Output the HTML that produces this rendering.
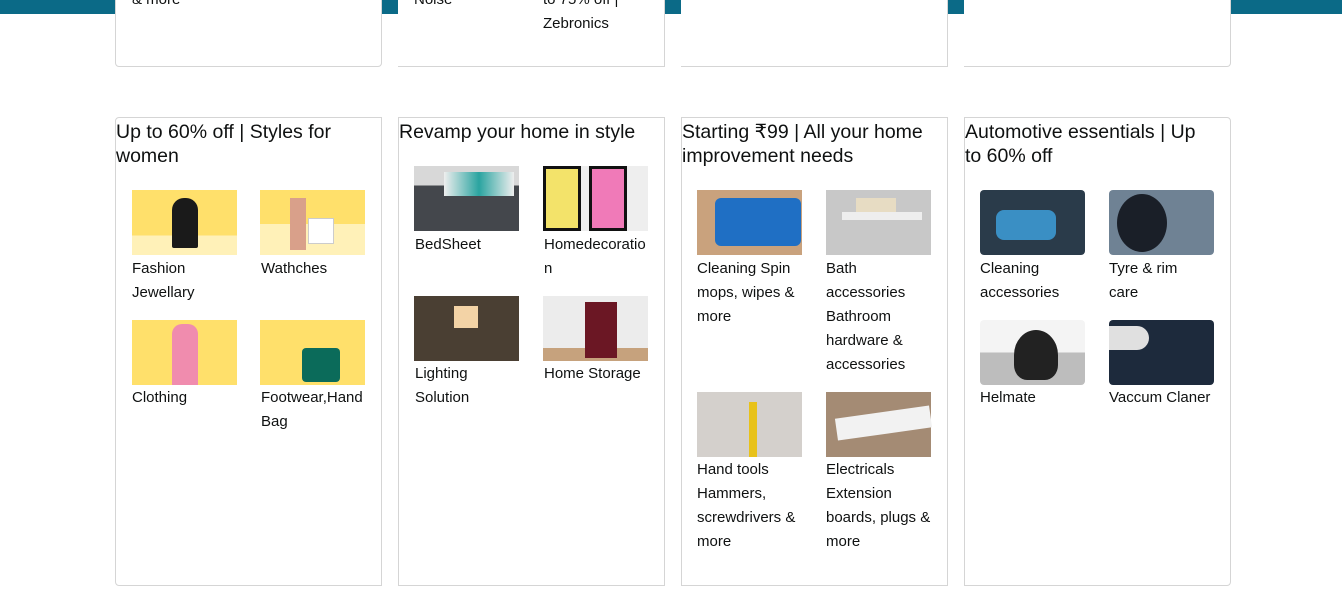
<!DOCTYPE html>
<html><head><meta charset="utf-8"><style>
*{margin:0;padding:0;box-sizing:border-box}
body{width:1342px;height:608px;background:#fff;position:relative;overflow:hidden;font-family:"Segoe UI","Liberation Sans","DejaVu Sans",sans-serif;color:#0f1111}
.bar{position:absolute;left:0;top:0;width:1342px;height:14px;background:#0b6a87}
.card{position:absolute;background:#fff;border:1px solid #d5d5d5}
.h{position:absolute;font-size:19.5px;line-height:24px;color:#0f1111;width:262px}
.img{position:absolute;width:105px;height:65px}
.t{position:absolute;font-size:15px;line-height:24px;width:106px;color:#0f1111;overflow-wrap:anywhere}
</style></head><body>
<div class="bar"></div>
<div class="card" style="left:115px;top:-10px;width:267px;height:77px;border-radius:0 0 4px 4px"></div>
<div class="card" style="left:398px;top:-10px;width:267px;height:77px;border-left:none"></div>
<div class="card" style="left:681px;top:-10px;width:267px;height:77px;border-left:none"></div>
<div class="card" style="left:964px;top:-10px;width:267px;height:77px;border-left:none;border-radius:0 0 4px 0"></div>
<div class="t" style="left:132px;top:-12px">&amp; more</div>
<div class="t" style="left:414px;top:-12px">Noise</div>
<div class="t" style="left:543px;top:-12px">to 75% off | Zebronics</div>

<div class="card" style="left:115px;top:117px;width:267px;height:469px;border-radius:4px 0 0 4px"></div>
<div class="card" style="left:398px;top:117px;width:267px;height:469px"></div>
<div class="card" style="left:681px;top:117px;width:267px;height:469px"></div>
<div class="card" style="left:964px;top:117px;width:267px;height:469px;border-radius:0 4px 4px 0"></div>

<div class="h" style="left:116px;top:120px">Up to 60% off | Styles for women</div>
<div class="h" style="left:399px;top:120px">Revamp your home in style</div>
<div class="h" style="left:682px;top:120px">Starting ₹99 | All your home improvement needs</div>
<div class="h" style="left:965px;top:120px;width:250px">Automotive essentials | Up to 60% off</div>

<div class="img" style="left:132px;top:190px;background:linear-gradient(#ffe06b 70%,#fff1b8 70%)"><div style="position:absolute;left:40px;top:8px;width:26px;height:50px;background:#1a1a1a;border-radius:12px 12px 2px 2px"></div></div>
<div class="img" style="left:260px;top:190px;background:linear-gradient(#ffe06b 52%,#fff1b8 52%)"><div style="position:absolute;left:48px;top:28px;width:26px;height:26px;background:#fff;border:1px solid #ccc"></div><div style="position:absolute;left:30px;top:8px;width:16px;height:52px;background:#d9a08a"></div></div>
<div class="img" style="left:132px;top:320px;background:#ffe06b"><div style="position:absolute;left:40px;top:4px;width:26px;height:61px;background:#f08cae;border-radius:10px 10px 0 0"></div></div>
<div class="img" style="left:260px;top:320px;background:#ffe06b"><div style="position:absolute;left:42px;top:28px;width:38px;height:34px;background:#0b6b5a;border-radius:4px"></div></div>
<div class="t" style="left:132px;top:257px">Fashion Jewellary</div>
<div class="t" style="left:261px;top:257px">Wathches</div>
<div class="t" style="left:132px;top:386px">Clothing</div>
<div class="t" style="left:261px;top:386px">Footwear,HandBag</div>

<div class="img" style="left:414px;top:166px;background:linear-gradient(#d8d8d8 30%,#44474c 30%)"><div style="position:absolute;left:30px;top:6px;width:70px;height:24px;background:linear-gradient(90deg,#eee,#2aa4a0,#eee)"></div></div>
<div class="img" style="left:543px;top:166px;background:#eeeeee"><div style="position:absolute;left:0;top:0;width:38px;height:65px;border:3px solid #111;background:#f3e36a"></div><div style="position:absolute;left:46px;top:0;width:38px;height:65px;border:3px solid #111;background:#f07ab8"></div></div>
<div class="img" style="left:414px;top:296px;background:#4a3f33"><div style="position:absolute;left:40px;top:10px;width:24px;height:22px;background:#f3d3a6"></div></div>
<div class="img" style="left:543px;top:296px;background:linear-gradient(#ececec 80%,#c6a27d 80%)"><div style="position:absolute;left:42px;top:6px;width:32px;height:56px;background:#6b1724"></div></div>
<div class="t" style="left:415px;top:233px">BedSheet</div>
<div class="t" style="left:544px;top:233px">Homedecoration</div>
<div class="t" style="left:415px;top:362px">Lighting Solution</div>
<div class="t" style="left:544px;top:362px;width:120px">Home Storage</div>

<div class="img" style="left:697px;top:190px;background:#c9a27d"><div style="position:absolute;left:18px;top:8px;width:86px;height:48px;background:#1f6fc4;border-radius:6px"></div></div>
<div class="img" style="left:826px;top:190px;background:#c8c8c8"><div style="position:absolute;left:16px;top:22px;width:80px;height:8px;background:#eee"></div><div style="position:absolute;left:30px;top:8px;width:40px;height:14px;background:#e7dcc3"></div></div>
<div class="img" style="left:697px;top:392px;background:#d4d0cc"><div style="position:absolute;left:52px;top:10px;width:8px;height:55px;background:#e8c21a"></div></div>
<div class="img" style="left:826px;top:392px;background:#a48b74"><div style="position:absolute;left:10px;top:20px;width:95px;height:22px;background:#f2f2f2;transform:rotate(-8deg)"></div></div>
<div class="t" style="left:697px;top:257px">Cleaning Spin mops, wipes &amp; more</div>
<div class="t" style="left:826px;top:257px">Bath accessories Bathroom hardware &amp; accessories</div>
<div class="t" style="left:697px;top:458px">Hand tools Hammers, screwdrivers &amp; more</div>
<div class="t" style="left:826px;top:458px">Electricals Extension boards, plugs &amp; more</div>

<div class="img" style="left:980px;top:190px;background:#2a3b4a;border-radius:4px"><div style="position:absolute;left:16px;top:20px;width:60px;height:30px;background:#3a8fc4;border-radius:8px"></div></div>
<div class="img" style="left:1109px;top:190px;background:#6f8294;border-radius:4px"><div style="position:absolute;left:8px;top:4px;width:50px;height:58px;border-radius:50%;background:#1a1f28"></div></div>
<div class="img" style="left:980px;top:320px;background:linear-gradient(#f4f4f4 50%,#bdbdbd 50%);border-radius:4px"><div style="position:absolute;left:34px;top:10px;width:44px;height:50px;border-radius:50% 50% 30% 30%;background:#222"></div></div>
<div class="img" style="left:1109px;top:320px;background:#1d2a3c;border-radius:4px"><div style="position:absolute;left:0;top:6px;width:40px;height:24px;background:#e0e0e0;border-radius:0 12px 12px 0"></div></div>
<div class="t" style="left:980px;top:257px">Cleaning accessories</div>
<div class="t" style="left:1109px;top:257px;width:95px">Tyre &amp; rim care</div>
<div class="t" style="left:980px;top:386px">Helmate</div>
<div class="t" style="left:1109px;top:386px;width:120px">Vaccum Claner</div>
</body></html>
